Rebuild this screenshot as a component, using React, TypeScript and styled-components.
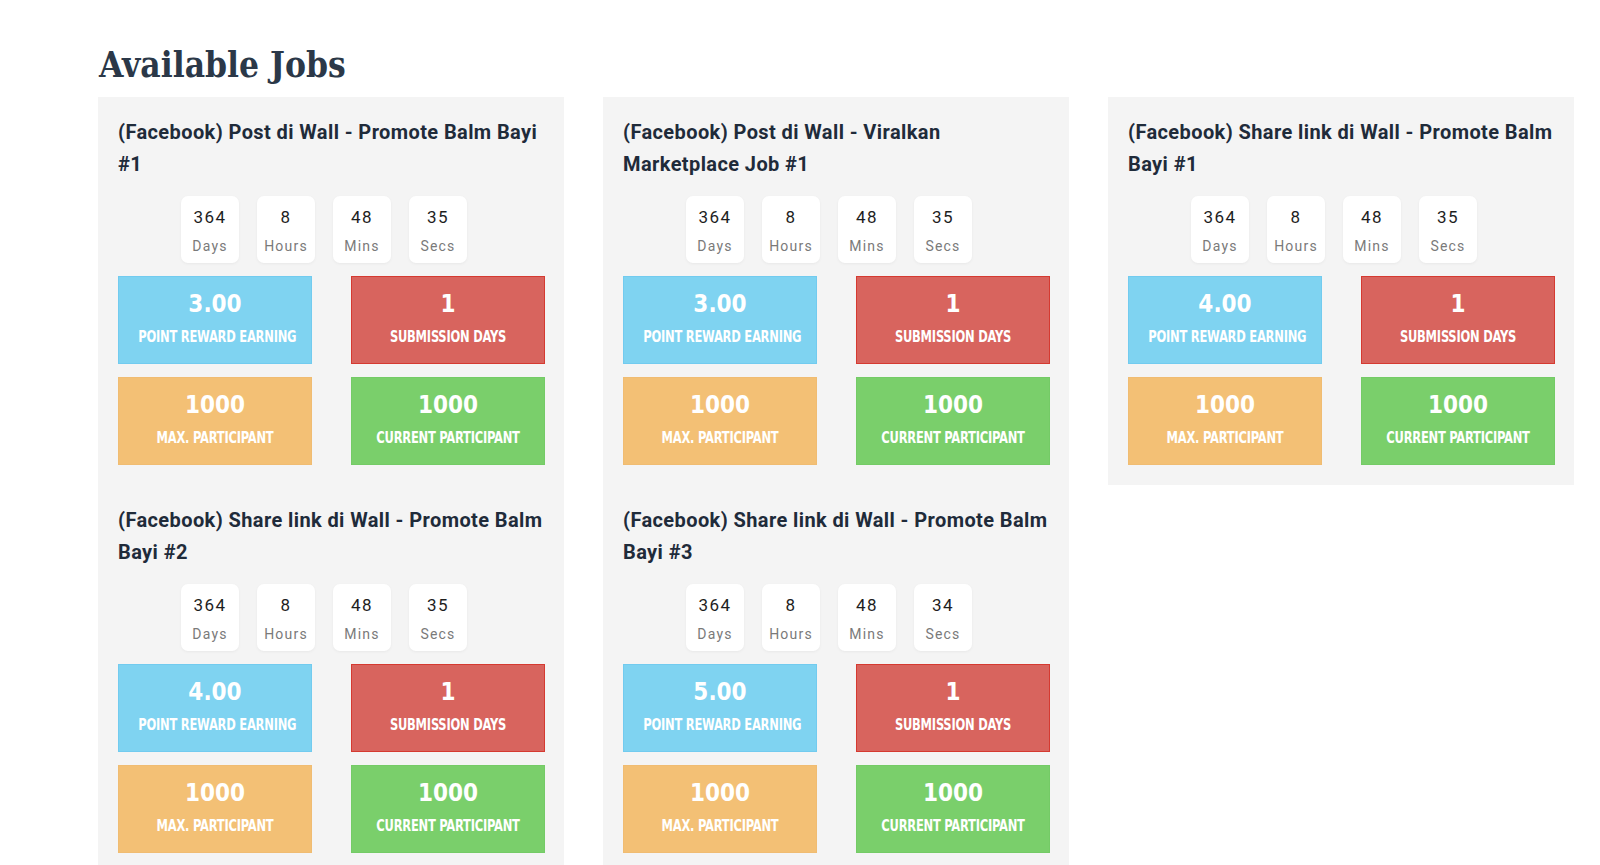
import styled, { createGlobalStyle } from 'styled-components';

const GlobalStyle = createGlobalStyle`
  body {
    margin: 0;
    background: #fff;
    font-family: Roboto, 'Liberation Sans', sans-serif;
  }
`;

const Page = styled.div`
  padding: 45px 0 40px 98px;
`;

const Heading = styled.h1`
  margin: 0 0 12px 1px;
  font-family: 'DejaVu Serif Condensed', 'DejaVu Serif', serif;
  font-weight: bold;
  font-size: 35px;
  line-height: 40px;
  color: #2b3848;
`;

const JobGrid = styled.div`
  display: grid;
  grid-template-columns: repeat(3, 466px);
  column-gap: 39px;
  align-items: start;
`;

const Card = styled.div`
  background: #f4f4f4;
  padding: 19px 19px 20px 20px;
`;

const JobTitle = styled.h3`
  margin: 0;
  font-size: 20px;
  font-weight: 700;
  line-height: 32px;
  letter-spacing: 0.4px;
  color: #1f2b3a;
`;

const Countdown = styled.div`
  display: flex;
  justify-content: center;
  gap: 18px;
  padding-right: 15px;
  margin: 16px 0 13px;
`;

const TimeBox = styled.div`
  width: 58px;
  height: 67px;
  box-sizing: border-box;
  padding-top: 8px;
  background: #fff;
  border-radius: 7px;
  box-shadow: 0 1px 3px rgba(0, 0, 0, 0.05);
  text-align: center;
`;

const TimeValue = styled.div`
  font-size: 17px;
  line-height: 26px;
  letter-spacing: 1.5px;
  color: #1e1e1e;
`;

const TimeLabel = styled.div`
  margin-top: 3px;
  font-size: 14px;
  line-height: 26px;
  letter-spacing: 1.2px;
  color: #7a7a7a;
`;

const StatGrid = styled.div`
  display: grid;
  grid-template-columns: 194px 194px;
  justify-content: space-between;
  row-gap: 13px;
`;

const StatTile = styled.div<{ $bg: string; $border: string }>`
  height: 88px;
  box-sizing: border-box;
  padding-top: 12px;
  background: ${(p) => p.$bg};
  border: 1px solid ${(p) => p.$border};
  color: #fff;
  text-align: center;
`;

const StatValue = styled.div`
  font-family: 'DejaVu Sans Condensed', 'DejaVu Sans', sans-serif;
  font-weight: bold;
  font-size: 24px;
  line-height: 30px;
`;

const StatLabel = styled.div`
  margin-top: 8px;
  font-family: 'DejaVu Sans Condensed', 'DejaVu Sans', sans-serif;
  font-weight: bold;
  font-size: 16px;
  line-height: 20px;
  letter-spacing: -0.3px;
  white-space: nowrap;
  transform: scaleX(0.8);
`;

const tileColors = {
  blue: { bg: '#7fd3f1', border: '#72cbef' },
  red: { bg: '#d8645e', border: '#d53a31' },
  orange: { bg: '#f3c075', border: '#f0bc72' },
  green: { bg: '#7acf6b', border: '#74cb66' },
};

interface Job {
  title: string;
  reward: string;
  secs: number;
}

const jobs: Job[] = [
  { title: '(Facebook) Post di Wall - Promote Balm Bayi #1', reward: '3.00', secs: 35 },
  { title: '(Facebook) Post di Wall - Viralkan Marketplace Job #1', reward: '3.00', secs: 35 },
  { title: '(Facebook) Share link di Wall - Promote Balm Bayi #1', reward: '4.00', secs: 35 },
  { title: '(Facebook) Share link di Wall - Promote Balm Bayi #2', reward: '4.00', secs: 35 },
  { title: '(Facebook) Share link di Wall - Promote Balm Bayi #3', reward: '5.00', secs: 34 },
];

const Stat = ({ value, label, color }: { value: string; label: string; color: keyof typeof tileColors }) => (
  <StatTile $bg={tileColors[color].bg} $border={tileColors[color].border}>
    <StatValue>{value}</StatValue>
    <StatLabel>{label}</StatLabel>
  </StatTile>
);

const JobCard = ({ job }: { job: Job }) => {
  const timer = [
    { v: 364, l: 'Days' },
    { v: 8, l: 'Hours' },
    { v: 48, l: 'Mins' },
    { v: job.secs, l: 'Secs' },
  ];
  return (
    <Card>
      <JobTitle>{job.title}</JobTitle>
      <Countdown>
        {timer.map((t) => (
          <TimeBox key={t.l}>
            <TimeValue>{t.v}</TimeValue>
            <TimeLabel>{t.l}</TimeLabel>
          </TimeBox>
        ))}
      </Countdown>
      <StatGrid>
        <Stat value={job.reward} label="POINT REWARD EARNING" color="blue" />
        <Stat value="1" label="SUBMISSION DAYS" color="red" />
        <Stat value="1000" label="MAX. PARTICIPANT" color="orange" />
        <Stat value="1000" label="CURRENT PARTICIPANT" color="green" />
      </StatGrid>
    </Card>
  );
};

const App: React.FC = () => (
  <>
    <GlobalStyle />
    <Page>
      <Heading>Available Jobs</Heading>
      <JobGrid>
        {jobs.map((job) => (
          <JobCard key={job.title} job={job} />
        ))}
      </JobGrid>
    </Page>
  </>
);

export default App;
